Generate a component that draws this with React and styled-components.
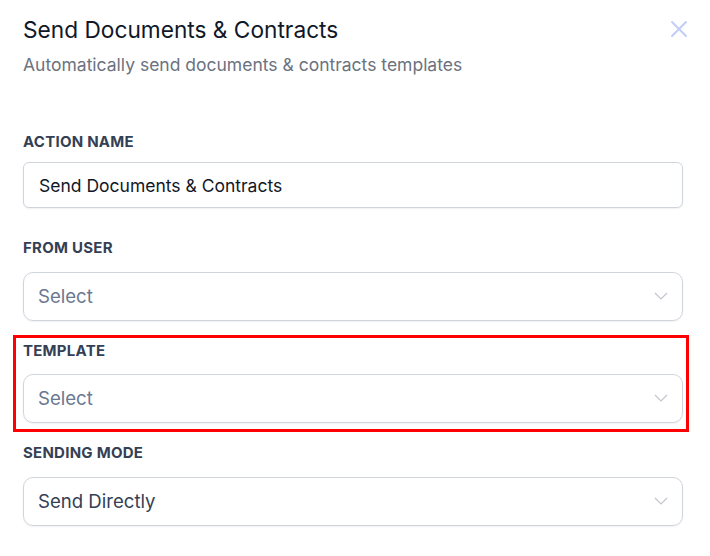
import styled, { createGlobalStyle } from "styled-components";

const GlobalStyle = createGlobalStyle`
  body {
    margin: 0;
    background: #fff;
    font-family: Inter, "Noto Sans", sans-serif;
  }
`;

const Modal = styled.div`
  width: 710px;
  height: 556px;
  box-sizing: border-box;
  padding: 16px 27px 0 23px;
  overflow: hidden;
`;

const Header = styled.div`
  display: flex;
  justify-content: space-between;
  align-items: flex-start;
`;

const Title = styled.h2`
  margin: 0;
  font-size: 22.7px;
  line-height: 28px;
  font-weight: 400;
  color: #101828;
`;

const Subtitle = styled.p`
  margin: 9px 0 0;
  font-size: 17.5px;
  line-height: 24px;
  color: #6b7280;
`;

const CloseButton = styled.button`
  border: none;
  background: none;
  padding: 0;
  margin: 3px -6px 0 0;
  width: 20px;
  height: 20px;
  display: flex;
  align-items: center;
  justify-content: center;
  cursor: pointer;
`;

const Form = styled.div`
  margin-top: 55px;
  display: flex;
  flex-direction: column;
`;

const Field = styled.div`
  display: flex;
  flex-direction: column;
  margin-bottom: ${({ $gap }) => $gap}px;
`;

const Label = styled.label`
  font-size: 15px;
  line-height: 20px;
  font-weight: 700;
  letter-spacing: 0.25px;
  color: #344054;
  text-transform: uppercase;
  margin-bottom: ${({ $gap }) => $gap}px;
`;

const TextInput = styled.input`
  height: 46px;
  box-sizing: border-box;
  border: 1px solid #d0d5dd;
  border-radius: 6px;
  padding: 0 15px;
  font-family: inherit;
  font-size: 17.5px;
  color: #111827;
  box-shadow: 0 1px 2px rgba(16, 24, 40, 0.06);
  outline: none;
`;

const SelectBox = styled.div`
  height: 49px;
  box-sizing: border-box;
  border: 1px solid #d0d5dd;
  border-radius: 10px;
  padding: 0 14px 2px;
  display: flex;
  align-items: center;
  justify-content: space-between;
  box-shadow: 0 1px 2px rgba(16, 24, 40, 0.06);
  font-size: 18.6px;
  color: ${({ $placeholder }) => ($placeholder ? "#6b7790" : "#344054")};
`;

const Highlight = styled.div`
  border: 3px solid #ff0000;
  margin: 0 -6px 11px -10px;
  padding: 3px 3px 6px 7px;
`;

function Chevron() {
  return (
    <svg width="14" height="8" viewBox="0 0 14 8" fill="none">
      <polyline points="1,1 7,7 13,1" stroke="#c3c4cc" strokeWidth="1.2" />
    </svg>
  );
}

function Select({ value, placeholder }) {
  return (
    <SelectBox $placeholder={!value}>
      <span>{value || placeholder}</span>
      <Chevron />
    </SelectBox>
  );
}

export default function App() {
  return (
    <>
      <GlobalStyle />
      <Modal>
        <Header>
          <div>
            <Title>Send Documents &amp; Contracts</Title>
            <Subtitle>Automatically send documents &amp; contracts templates</Subtitle>
          </div>
          <CloseButton aria-label="Close">
            <svg width="18" height="18" viewBox="0 0 18 18">
              <path d="M2 2L16 16M16 2L2 16" stroke="#c3cdfb" strokeWidth="2" strokeLinecap="round" />
            </svg>
          </CloseButton>
        </Header>

        <Form>
          <Field $gap={30}>
            <Label $gap={10}>Action Name</Label>
            <TextInput defaultValue="Send Documents & Contracts" />
          </Field>

          <Field $gap={14}>
            <Label $gap={14}>From User</Label>
            <Select placeholder="Select" />
          </Field>

          <Highlight>
            <Field $gap={0}>
              <Label $gap={13}>Template</Label>
              <Select placeholder="Select" />
            </Field>
          </Highlight>

          <Field $gap={0}>
            <Label $gap={14}>Sending Mode</Label>
            <Select value="Send Directly" />
          </Field>
        </Form>
      </Modal>
    </>
  );
}
